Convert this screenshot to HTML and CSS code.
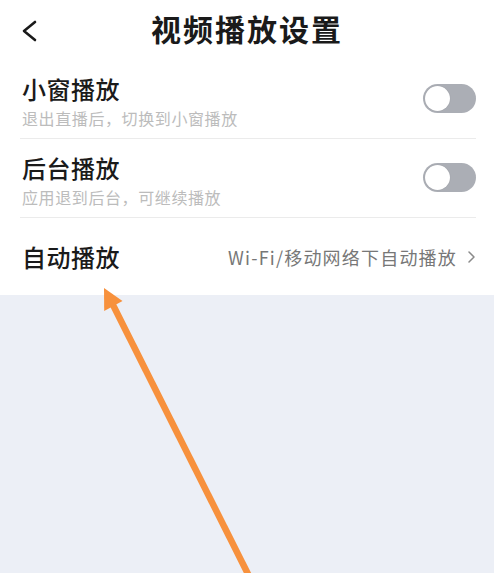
FILE: index.html
```html
<!DOCTYPE html>
<html lang="zh-CN">
<head>
    <meta charset="UTF-8">
    <meta name="viewport" content="width=device-width, initial-scale=1.0">
    <title>视频播放设置</title>
    <link rel="stylesheet" href="styles.css">
</head>
<body>
    <div class="panel">
        <div class="header">
            <svg class="back" width="18" height="24" viewBox="0 0 18 24">
                <polyline points="15,3 4,12 15,21" fill="none" stroke="#1a1a1a" stroke-width="2.6" stroke-linecap="round" stroke-linejoin="round"/>
            </svg>
            <h1 class="title">视频播放设置</h1>
        </div>

        <ul class="list">
            <li class="row">
                <div class="text">
                    <p class="label">小窗播放</p>
                    <p class="desc">退出直播后，切换到小窗播放</p>
                </div>
                <span class="switch"></span>
            </li>
            <li class="row">
                <div class="text">
                    <p class="label">后台播放</p>
                    <p class="desc">应用退到后台，可继续播放</p>
                </div>
                <span class="switch"></span>
            </li>
            <li class="row row-link">
                <p class="label">自动播放</p>
                <span class="value">Wi-Fi/移动网络下自动播放</span>
                <svg class="more" width="9" height="14" viewBox="0 0 9 14">
                    <polyline points="2,2 7,7 2,12" fill="none" stroke="#8a8a8a" stroke-width="1.5" stroke-linecap="round" stroke-linejoin="round"/>
                </svg>
            </li>
        </ul>
    </div>

    <!-- 标注箭头 -->
    <svg class="mark" width="494" height="573" viewBox="0 0 494 573">
        <line x1="251" y1="580" x2="113" y2="305" stroke="#f7913d" stroke-width="6.5"/>
        <polygon points="104,288 122.5,301 104.2,311" fill="#f7913d"/>
    </svg>
</body>
</html>
```

FILE: styles.css
```css
* {
    margin: 0;
    padding: 0;
    box-sizing: border-box;
}
ul, li {
    list-style-type: none;
}
html, body {
    background: #eceff6;
}
body {
    min-height: 573px;
    position: relative;
    font-family: "Noto Sans CJK SC", "Noto Sans", sans-serif;
    color: #1a1a1a;
}
.panel {
    background: #fff;
}
.header {
    height: 60px;
    padding-bottom: 4px;
    display: flex;
    align-items: center;
    justify-content: center;
    position: relative;
}
.header .back {
    position: absolute;
    left: 20px;
    top: 19px;
}
.title {
    font-size: 30px;
    font-weight: 700;
    letter-spacing: 2px;
    line-height: 40px;
}
.list {
    padding: 0 18px 0 20px;
}
.row {
    display: flex;
    align-items: center;
    padding: 14px 0 10px 2px;
    border-bottom: 1px solid #ebebeb;
}
.row .text {
    flex: 1;
}
.label {
    font-size: 24px;
    font-weight: 500;
    line-height: 30px;
    letter-spacing: 0.5px;
}
.desc {
    margin-top: 4px;
    font-size: 16px;
    line-height: 20px;
    letter-spacing: 0.6px;
    color: #bcbcbc;
}
.switch {
    width: 53px;
    height: 29px;
    border-radius: 15px;
    background: #abaeb5;
    position: relative;
    margin-bottom: 5px;
}
.switch:after {
    content: '';
    position: absolute;
    left: 2px;
    top: 2px;
    width: 25px;
    height: 25px;
    border-radius: 50%;
    background: #fff;
    box-shadow: 0 0 1px rgba(0,0,0,0.2);
}
.row-link {
    height: 77px;
    padding: 0 0 0 2px;
    border-bottom: none;
}
.row-link .label {
    flex: 1;
}
.value {
    font-size: 18px;
    letter-spacing: 1.2px;
    color: #777;
}
.more {
    margin-left: 10px;
}
.mark {
    position: absolute;
    left: 0;
    top: 0;
    pointer-events: none;
}
```
